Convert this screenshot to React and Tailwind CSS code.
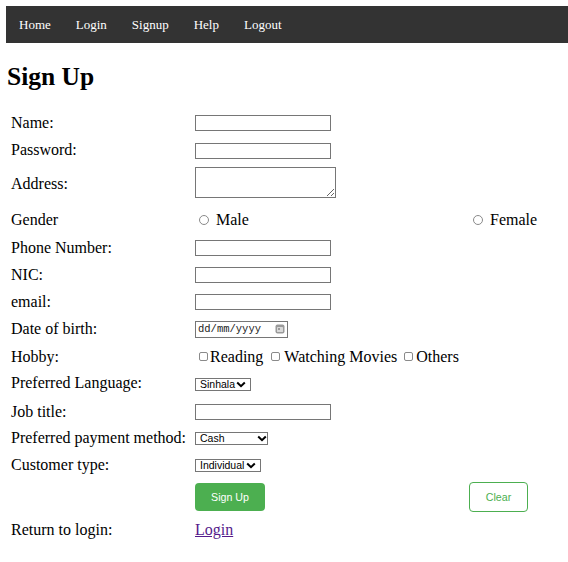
import React from "react";

const links = ["Home", "Login", "Signup", "Help", "Logout"];

function Chevron() {
  return (
    <svg width="10" height="7" viewBox="0 0 10 7" className="shrink-0">
      <path d="M1.2 1.5 L5 5.2 L8.8 1.5" fill="none" stroke="#000" strokeWidth="2" />
    </svg>
  );
}

function FakeSelect({ value, width, gap }) {
  return (
    <div
      className={`flex items-center h-[13px] border border-[#767676] pl-[4px] font-['Liberation_Sans',Arial,sans-serif] text-[10.5px] leading-none text-black ${width}`}
    >
      <span>{value}</span>
      <span className={gap} />
      <Chevron />
    </div>
  );
}

function Row({ h, label, children, third }) {
  return (
    <div className={`flex items-center ${h}`}>
      <div className="w-[184px] shrink-0">{label}</div>
      <div className="w-[274px] shrink-0 flex items-center">{children}</div>
      <div className="flex items-center">{third}</div>
    </div>
  );
}

const textInput = "w-[136px] h-[16px] border border-[#767676] bg-white";

export default function App() {
  return (
    <div className="min-h-[562px] bg-white text-black font-['Liberation_Serif','Times_New_Roman',serif]">
      <nav className="ml-[6px] mt-[6px] h-[37px] bg-[#333333] flex items-center pl-[0.5px]">
        {links.map((l) => (
          <a key={l} href="#" className="px-[12.5px] text-[13px] text-white">
            {l}
          </a>
        ))}
      </nav>

      <h1 className="ml-[7px] mt-[21px] h-[26px] text-[25.5px] leading-[26px] font-bold">
        Sign Up
      </h1>

      <form className="ml-[11px] mt-[19.5px] text-[16px]">
        <Row h="h-[27px]" label="Name:">
          <input className={textInput} />
        </Row>
        <Row h="h-[28px]" label={<span className="relative top-[-1px]">Password:</span>}>
          <input type="password" className={textInput} />
        </Row>
        <Row h="h-[35px]" label={<span className="relative top-[1.5px]">Address:</span>}>
          <textarea className="w-[141px] h-[31px] border border-[#767676] bg-white" />
        </Row>
        <Row
          h="h-[35px] pt-[6px]"
          label="Gender"
          third={
            <label className="flex items-center">
              <input
                type="radio"
                name="gender"
                className="appearance-none ml-[4px] mr-[7px] w-[10px] h-[10px] rounded-full border border-[#8a8a8a] bg-white"
              />
              Female
            </label>
          }
        >
          <label className="flex items-center">
            <input
              type="radio"
              name="gender"
              className="appearance-none ml-[4px] mr-[7px] w-[10px] h-[10px] rounded-full border border-[#8a8a8a] bg-white"
            />
            Male
          </label>
        </Row>
        <Row h="h-[27px]" label="Phone Number:">
          <input className={textInput} />
        </Row>
        <Row h="h-[27px]" label="NIC:">
          <input className={textInput} />
        </Row>
        <Row h="h-[27px]" label="email:">
          <input type="email" className={textInput} />
        </Row>
        <Row h="h-[27px]" label="Date of birth:">
          <div className="flex items-center w-[93px] h-[17px] border border-[#767676] pl-[2px] pr-[2px]">
            <span className="font-['Liberation_Mono',monospace] text-[10.5px] leading-none text-[#222]">
              dd/mm/yyyy
            </span>
            <svg width="10" height="10" viewBox="0 0 10 10" className="ml-auto">
              <rect x="0.5" y="0.5" width="9" height="9" rx="2" fill="#9a9a9a" />
              <rect x="2" y="3" width="6" height="5" rx="0.5" fill="#d9d9d9" />
              <rect x="3" y="4" width="2" height="2" fill="#9a9a9a" />
            </svg>
          </div>
        </Row>
        <Row h="h-[28px]" label="Hobby:">
          <label className="flex items-center">
            <input
              type="checkbox"
              className="appearance-none ml-[4px] mr-[2px] w-[9px] h-[9px] rounded-[2px] border border-[#8a8a8a] bg-white"
            />
            Reading
          </label>
          <label className="flex items-center ml-[4px]">
            <input
              type="checkbox"
              className="appearance-none ml-[4px] mr-[4px] w-[9px] h-[9px] rounded-[2px] border border-[#8a8a8a] bg-white"
            />
            Watching Movies
          </label>
          <label className="flex items-center ml-[3px]">
            <input
              type="checkbox"
              className="appearance-none ml-[4px] mr-[3px] w-[9px] h-[9px] rounded-[2px] border border-[#8a8a8a] bg-white"
            />
            Others
          </label>
        </Row>
        <Row h="h-[28px]" label={<span className="relative top-[-1.5px]">Preferred Language:</span>}>
          <FakeSelect value="Sinhala" width="w-[56px]" gap="w-[1px]" />
        </Row>
        <Row h="h-[26px]" label="Job title:">
          <input className={textInput} />
        </Row>
        <Row h="h-[27px]" label="Preferred payment method:">
          <FakeSelect value="Cash" width="w-[73px]" gap="flex-1" />
        </Row>
        <Row h="h-[28px]" label={<span className="relative top-[-1px]">Customer type:</span>}>
          <FakeSelect value="Individual" width="w-[66px]" gap="w-[2px]" />
        </Row>
        <Row
          h="h-[34px]"
          label=""
          third={
            <button
              type="button"
              className="w-[59px] h-[30px] rounded-[4px] border border-[#4CAF50] bg-white text-[#4CAF50] font-['Liberation_Sans',Arial,sans-serif] text-[10.67px]"
            >
              Clear
            </button>
          }
        >
          <button
            type="submit"
            className="w-[70px] h-[28px] rounded-[4px] bg-[#4CAF50] text-white font-['Liberation_Sans',Arial,sans-serif] text-[10.67px]"
          >
            Sign Up
          </button>
        </Row>
        <Row h="h-[33px]" label="Return to login:">
          <a href="#" className="text-[#551A8B] underline">
            Login
          </a>
        </Row>
      </form>
    </div>
  );
}
